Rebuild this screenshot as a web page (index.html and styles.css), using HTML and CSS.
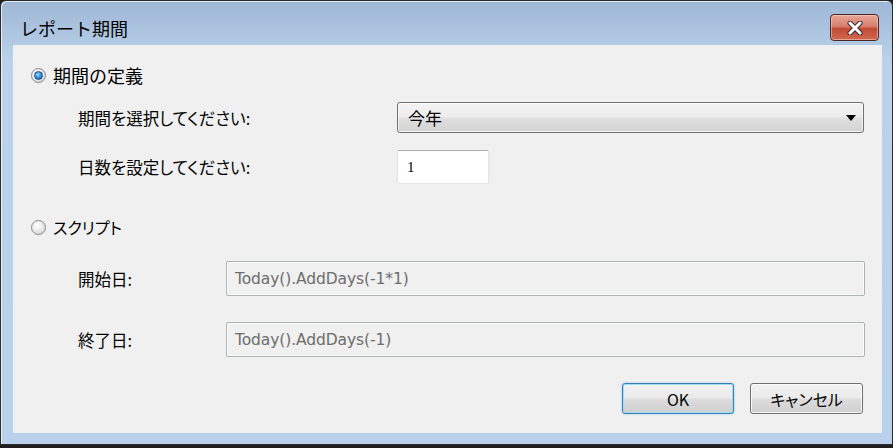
FILE: index.html
```html
<!DOCTYPE html>
<html lang="ja">
<head>
  <meta charset="UTF-8">
  <title>レポート期間</title>
  <link rel="stylesheet" href="styles.css">
</head>
<body>
  <div class="window">
    <div class="titlebar">
      <span class="title">レポート期間</span>
      <button class="close-btn" aria-label="閉じる">
        <svg width="20" height="14" viewBox="0 0 20 14">
          <path d="M5 2 L15 12 M15 2 L5 12" stroke="#3a2a2a" stroke-width="5" stroke-linecap="round"/>
          <path d="M5 2 L15 12 M15 2 L5 12" stroke="#ffffff" stroke-width="3" stroke-linecap="round"/>
        </svg>
      </button>
    </div>

    <div class="client">
      <label class="radio-row">
        <span class="radio checked"></span>
        <span class="radio-text wide">期間の定義</span>
      </label>

      <div class="field-row first">
        <span class="field-label">期間を選択してください:</span>
        <div class="combo">
          <span>今年</span>
          <span class="combo-arrow"></span>
        </div>
      </div>

      <div class="field-row second">
        <span class="field-label">日数を設定してください:</span>
        <div class="textbox">1</div>
      </div>

      <label class="radio-row script">
        <span class="radio"></span>
        <span class="radio-text">スクリプト</span>
      </label>

      <div class="script-row">
        <span class="script-label">開始日:</span>
        <div class="script-box">Today().AddDays(-1*1)</div>
      </div>

      <div class="script-row">
        <span class="script-label">終了日:</span>
        <div class="script-box">Today().AddDays(-1)</div>
      </div>

      <div class="buttons">
        <button class="btn default">OK</button>
        <button class="btn">キャンセル</button>
      </div>
    </div>
  </div>
</body>
</html>
```

FILE: styles.css
```css
body {
  margin: 0;
  background-color: #1e1e1e;
  font-family: "Noto Sans CJK JP", "Noto Sans", sans-serif;
  color: #000;
}

.window {
  width: 893px;
  height: 445px;
  box-sizing: border-box;
  padding: 0 10px 11px 12px;
  border: 1px solid #2b2b2b;
  border-radius: 6px 6px 0 0;
  background: linear-gradient(to bottom, #9eb7d5 0px, #b2c9e4 40px, #bcd2eb 60px, #bad1eb 100%);
  box-shadow: inset 1px 1px 0 rgba(255, 255, 255, 0.7);
  display: flex;
  flex-direction: column;
}

.titlebar {
  height: 44px;
  padding: 13px 3px 0 7px;
  box-sizing: border-box;
  display: flex;
  justify-content: space-between;
  align-items: flex-start;
}

.title {
  font-size: 18px;
  line-height: 28px;
}

.close-btn {
  width: 49px;
  height: 27px;
  padding: 0;
  border: 1px solid #4b2626;
  border-radius: 4px;
  background: linear-gradient(to bottom, #e9a597 0%, #d8806e 45%, #c24a33 55%, #cf6a52 100%);
  box-shadow: inset 0 0 0 1px rgba(255, 220, 210, 0.5);
  display: flex;
  align-items: center;
  justify-content: center;
}

.client {
  flex: 1;
  background-color: #f0f0f0;
  padding: 22px 17px 0 18px;
  box-sizing: border-box;
  font-size: 16.5px;
  font-feature-settings: "palt";
}

.radio-row {
  display: flex;
  align-items: center;
  height: 16px;
  gap: 7px;
}

.radio-row.script {
  margin-top: 35px;
}

.radio-text {
  font-size: 16px;
}

.radio-text.wide {
  font-size: 18px;
  font-feature-settings: normal;
}

.radio {
  width: 13px;
  height: 13px;
  border-radius: 50%;
  border: 1px solid #8a8a8a;
  background: radial-gradient(circle at 40% 35%, #ffffff 0%, #e6e6e6 55%, #c4c4c4 100%);
  position: relative;
}

.radio.checked::after {
  content: "";
  position: absolute;
  left: 2px;
  top: 2px;
  width: 9px;
  height: 9px;
  box-sizing: border-box;
  border-radius: 50%;
  border: 1px solid #1b4f88;
  background: radial-gradient(circle at 40% 35%, #a5dcff 0%, #3b96e0 45%, #0d5aa8 100%);
}

.field-row {
  display: flex;
  align-items: center;
  padding-left: 47px;
}

.field-row.first {
  margin-top: 19px;
}

.field-row.second {
  margin-top: 17px;
}

.field-label {
  width: 319px;
  flex-shrink: 0;
}

.combo {
  width: 467px;
  height: 31px;
  box-sizing: border-box;
  border: 1px solid #707070;
  border-radius: 3px;
  background: linear-gradient(to bottom, #f4f4f4 0%, #ececec 48%, #dfdfdf 52%, #d2d2d2 100%);
  box-shadow: inset 0 0 0 1px rgba(255, 255, 255, 0.7);
  display: flex;
  align-items: center;
  justify-content: space-between;
  padding: 0 7px 0 10px;
  font-size: 17px;
}

.combo-arrow {
  width: 0;
  height: 0;
  border-left: 5px solid transparent;
  border-right: 5px solid transparent;
  border-top: 6px solid #000;
}

.textbox {
  width: 92px;
  height: 34px;
  box-sizing: border-box;
  background-color: #fff;
  border: 1px solid #e2e3ea;
  border-top-color: #abadb3;
  border-radius: 2px;
  padding: 0 9px;
  display: flex;
  align-items: center;
  font-family: "Liberation Serif", serif;
  font-size: 15px;
}

.script-row {
  display: flex;
  align-items: center;
  padding-left: 47px;
  margin-top: 26px;
}

.script-label {
  width: 148px;
  flex-shrink: 0;
}

.script-box {
  width: 639px;
  height: 35px;
  box-sizing: border-box;
  border: 1px solid #adb2b5;
  border-radius: 2px;
  background-color: #f0f0f0;
  box-shadow: inset 0 0 0 1px #fafafa;
  padding: 0 8px;
  display: flex;
  align-items: center;
  color: #6d6d6d;
  font-family: "DejaVu Sans", sans-serif;
  font-size: 15.5px;
  letter-spacing: -0.1px;
}

.buttons {
  display: flex;
  justify-content: flex-end;
  gap: 16px;
  margin-top: 26px;
  padding-right: 2px;
}

.btn {
  width: 113px;
  height: 31px;
  border: 1px solid #707070;
  border-radius: 3px;
  background: linear-gradient(to bottom, #f2f2f2 0%, #ebebeb 48%, #dddddd 52%, #cfcfcf 100%);
  box-shadow: inset 0 0 0 1px rgba(255, 255, 255, 0.8);
  font-family: "Noto Sans CJK JP", sans-serif;
  font-feature-settings: "palt";
  font-size: 16px;
  color: #000;
  padding: 0;
}

.btn.default {
  width: 112px;
  border-color: #3c7fb1;
  box-shadow: inset 0 0 0 1px #9fdcf5, 0 0 2px rgba(60, 160, 220, 0.6);
}
```
